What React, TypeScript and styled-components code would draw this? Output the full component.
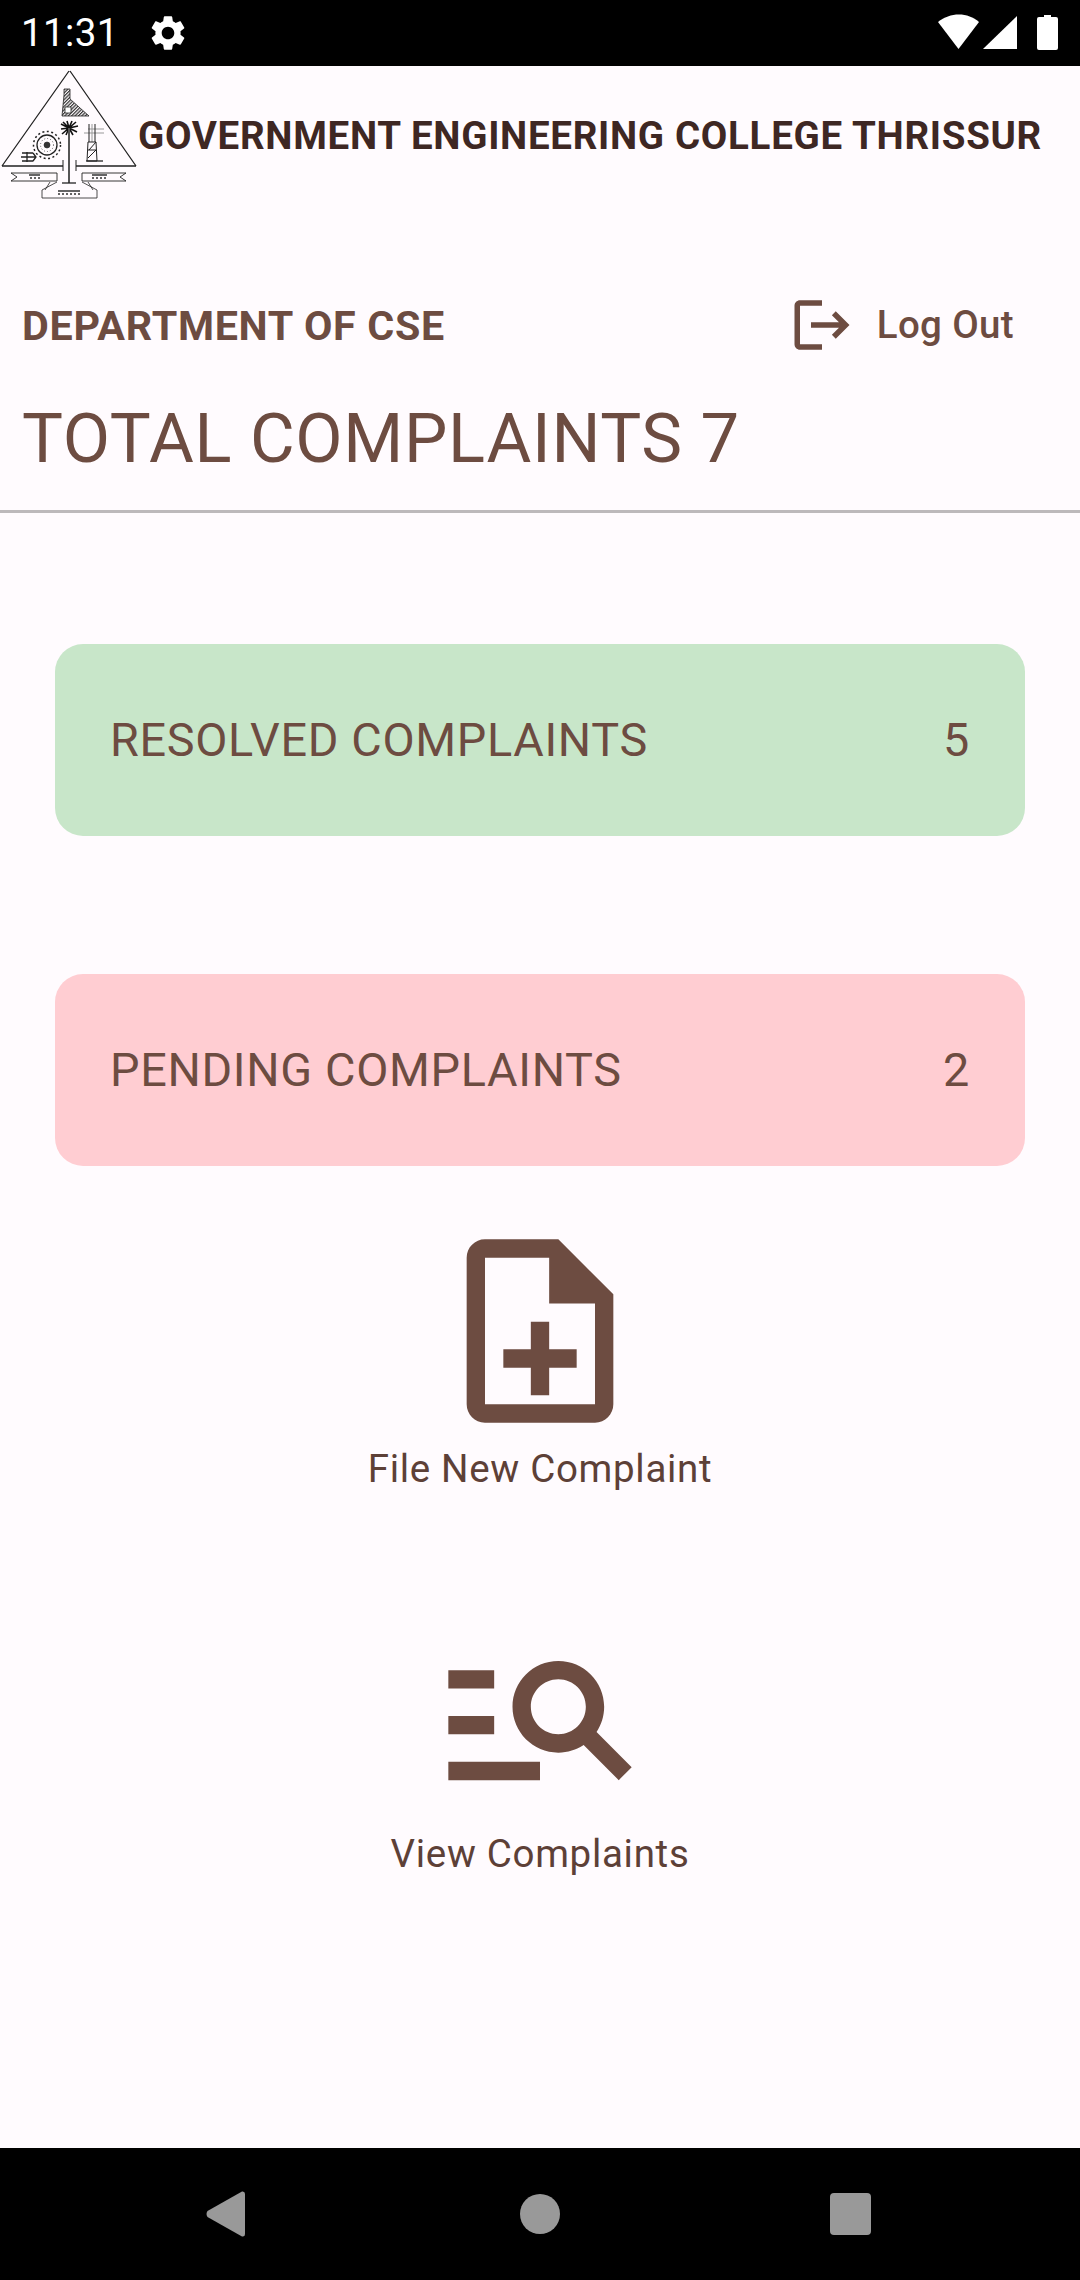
import React from "react";
import styled, { createGlobalStyle } from "styled-components";

const Global = createGlobalStyle`
  html, body { margin: 0; padding: 0; background: #fffbfe; }
  * { box-sizing: border-box; }
`;

const Screen = styled.div`
  width: 1080px;
  height: 2280px;
  display: flex;
  flex-direction: column;
  background: #fffbfe;
  font-family: Roboto, "Liberation Sans", sans-serif;
  overflow: hidden;
`;

const StatusBar = styled.div`
  height: 66px;
  flex: none;
  background: #000;
  color: #fff;
  display: flex;
  align-items: center;
  padding: 0 0 0 21px;
`;

const Clock = styled.span`
  font-size: 38.5px;
  letter-spacing: 0.4px;
  line-height: 66px;
  width: 126px;
`;

const StatusIcons = styled.div`
  margin-left: auto;
  display: flex;
  align-items: center;
`;

const Brand = styled.header`
  height: 138px;
  flex: none;
  display: flex;
  align-items: center;
`;

const Logo = styled.svg`
  width: 138px;
  height: 138px;
  flex: none;
`;

const College = styled.h1`
  margin: 2px 0 0;
  color: #3e2723;
  font-size: 38.5px;
  letter-spacing: 0.69px;
  line-height: 44px;
  font-weight: 700;
  white-space: nowrap;
`;

const DeptRow = styled.div`
  height: 110px;
  margin-top: 66px;
  flex: none;
  display: flex;
  align-items: center;
  justify-content: space-between;
  padding: 0 66px 0 22px;
`;

const Dept = styled.h2`
  margin: 2px 0 0;
  color: #6d4c41;
  font-size: 41.25px;
  letter-spacing: 0.69px;
  font-weight: 700;
  line-height: 46px;
`;

const LogOut = styled.div`
  display: flex;
  align-items: center;
  gap: 22px;
  color: #6d4c41;
  font-size: 38.5px;
  letter-spacing: 0.35px;
  font-weight: 500;
  line-height: 46px;
`;

const Total = styled.h2`
  margin: 20px 0 0;
  padding-left: 22px;
  color: #6d4c41;
  font-size: 68.75px;
  letter-spacing: 0.69px;
  font-weight: 400;
  line-height: 78px;
  flex: none;
`;

const Divider = styled.hr`
  margin: 32px 0 0;
  border: 0;
  height: 3px;
  background: #bdb9bb;
  flex: none;
`;

const Main = styled.main`
  flex: 1;
  display: flex;
  flex-direction: column;
  align-items: center;
  padding-top: 131px;
`;

const StatCard = styled.div<{ $bg: string; $gap: number }>`
  width: 970px;
  height: 192px;
  flex: none;
  border-radius: 28px;
  background: ${(p) => p.$bg};
  color: #6d4c41;
  margin-bottom: ${(p) => p.$gap}px;
  display: flex;
  align-items: center;
  justify-content: space-between;
  padding: 0 55px;
  font-size: 46.75px;
  letter-spacing: 0.69px;
`;

const Action = styled.div<{ $top: number }>`
  display: flex;
  flex-direction: column;
  align-items: center;
  margin-top: ${(p) => p.$top}px;
  color: #5d4037;
  font-size: 38.5px;
  line-height: 46px;
  letter-spacing: 0.69px;
`;

const ActionLabel = styled.span`
  margin-top: 5px;
`;

const NavBar = styled.nav`
  height: 132px;
  flex: none;
  background: #000;
  display: flex;
  align-items: center;
  padding: 0 0 0 206px;
`;

const NavCircle = styled.div`
  width: 40px;
  height: 40px;
  border-radius: 50%;
  background: #999;
  margin-left: 275px;
`;

const NavSquare = styled.div`
  width: 41px;
  height: 42px;
  border-radius: 4px;
  background: #999;
  margin-left: 270px;
`;

const Mono = ({ size, d, color = "#6d4c41" }: { size: number; d: string; color?: string }) => (
  <svg width={size} height={size} viewBox="0 0 24 24" fill={color} style={{ flex: "none" }}>
    <path d={d} />
  </svg>
);

const GEAR =
  "M19.14 12.94c.04-.3.06-.61.06-.94 0-.32-.02-.64-.07-.94l2.03-1.58c.18-.14.23-.41.12-.61l-1.92-3.32c-.12-.22-.37-.29-.59-.22l-2.39.96c-.5-.38-1.03-.7-1.62-.94l-.36-2.54c-.04-.24-.24-.41-.48-.41h-3.84c-.24 0-.43.17-.47.41l-.36 2.54c-.59.24-1.13.57-1.62.94l-2.39-.96c-.22-.08-.47 0-.59.22L2.74 8.87c-.12.21-.08.47.12.61l2.03 1.58c-.05.3-.09.63-.09.94s.02.64.07.94l-2.03 1.58c-.18.14-.23.41-.12.61l1.92 3.32c.12.22.37.29.59.22l2.39-.96c.5.38 1.03.7 1.62.94l.36 2.54c.05.24.24.41.48.41h3.84c.24 0 .44-.17.47-.41l.36-2.54c.59-.24 1.13-.56 1.62-.94l2.39.96c.22.08.47 0 .59-.22l1.92-3.32c.12-.22.07-.47-.12-.61l-2.01-1.58zM12 15.6c-1.98 0-3.6-1.62-3.6-3.6s1.62-3.6 3.6-3.6 3.6 1.62 3.6 3.6-1.62 3.6-3.6 3.6z";
const LOGOUT =
  "M17 7l-1.41 1.41L18.17 11H8v2h10.17l-2.58 2.58L17 17l5-5zM4 5h8V3H4c-1.1 0-2 .9-2 2v14c0 1.1.9 2 2 2h8v-2H4V5z";
const NOTE_ADD_OUTLINED =
  "M13 11h-2v3H8v2h3v3h2v-3h3v-2h-3zm1-9H6c-1.1 0-2 .9-2 2v16c0 1.1.89 2 1.99 2H18c1.1 0 2-.9 2-2V8l-6-6zm4 18H6V4h7v5h5v11z";
const MANAGE_SEARCH =
  "M7 9H2V7h5v2zm0 3H2v2h5v-2zm13.59 7l-3.83-3.83c-.8.52-1.74.83-2.76.83-2.76 0-5-2.24-5-5s2.24-5 5-5 5 2.24 5 5c0 1.02-.31 1.96-.83 2.75L22 17.59 20.59 19zM17 11c0-1.65-1.35-3-3-3s-3 1.35-3 3 1.35 3 3 3 3-1.35 3-3zM2 19h10v-2H2v2z";

const CollegeEmblem = () => (
  <Logo viewBox="0 66 138 138" fill="none" stroke="#222" strokeWidth={1}>
    <defs>
      <pattern id="dam-hatch" width="2.400" height="2.400" patternUnits="userSpaceOnUse" patternTransform="rotate(-45)">
        <rect width="2.400" height="1.200" fill="#333" stroke="none" />
      </pattern>
    </defs>
    <path d="M69 71 L2 166 M70 71 L136 166" strokeWidth={1.300} />
    <path d="M2 166 H63 M76 166 H136" strokeWidth={1.500} />
    <path d="M63 160 V171 M76 160 V171" strokeWidth={1} />
    <path d="M64 89 H70 V99 L89 116 H62 L64 95 Z" fill="url(#dam-hatch)" strokeWidth={0.8} />
    <path d="M65 107 h6 v6 h-6 z" fill="#fff" strokeWidth={0.8} />
    <path
      d="M69 128 L61 124 M69 128 L63 122 M69 128 L67 121 M69 128 L72 121 M69 128 L76 122 M69 128 L78 126 M69 128 L61 129 M69 128 L62 134 M69 128 L66 135 M69 128 L73 135 M69 128 L77 132"
      stroke="#111"
      strokeWidth={1.600}
    />
    <path d="M69 128 V183" strokeWidth={2} stroke="#555" />
    <path d="M62 183 H76" strokeWidth={1.300} />
    <circle cx="47" cy="145" r="10" strokeWidth={1.300} />
    <circle cx="47" cy="145" r="13.500" strokeWidth={1.500} strokeDasharray="2 2.500" />
    <circle cx="47" cy="145" r="3" fill="#333" strokeWidth={0.6} />
    <circle cx="47" cy="145" r="6.500" strokeWidth={0.7} strokeDasharray="1 2" />
    <path d="M22 153 H33 M21 157 H36 M22 161 H33 M33 153 L36 157 L33 161 M27 152 V162" strokeWidth={1.300} />
    <path d="M92 124 V142 M88 129 H104 M84 133 H104" stroke="#999" strokeWidth={1} />
    <path d="M95 124 V142 M89 124 V142 M88 142 H96 L97 161 H87 Z M89 150 L96 142 M88 158 L96 150 M88 150 H96" strokeWidth={1} />
    <path d="M86 161 H103" strokeWidth={1.300} />
    <path d="M11 173 H57 V181 H11 L17 177 Z" strokeWidth={0.9} />
    <path d="M82 173 H126 L120 177 L126 181 H82 Z" strokeWidth={0.9} />
    <path d="M29 175 h11 M30 178 h2 m2 0 h2 m2 0 h2 M92 175 h15 M92 178 h2 m2 0 h2 m2 0 h2 m2 0 h2" stroke="#333" strokeWidth={1.400} />
    <path d="M57 182 L42 190 V198 H97 V190 L82 182" strokeWidth={0.8} />
    <path d="M50 182 L45 190 M88 182 L93 190" strokeWidth={0.8} />
    <path d="M58 191 h22 M58 194 h2 m2 0 h2 m2 0 h2 m2 0 h2 m2 0 h2 m2 0 h2" stroke="#333" strokeWidth={1.400} />
  </Logo>
);

export default function App() {
  return (
    <Screen>
      <Global />
      <StatusBar>
        <Clock>11:31</Clock>
        <Mono size={42} d={GEAR} color="#fff" />
        <StatusIcons>
          <svg width="142" height="40" viewBox="0 0 142 40" fill="#fff">
            <path d="M0 9 C12 -1 30 -1 41 9 L20.500 36 Z" />
            <path d="M45 36 L79 3 V36 Z" />
            <path d="M99 6 a2 2 0 0 1 2 -2 h5 v-2 h7 v2 h5 a2 2 0 0 1 2 2 v29 a2 2 0 0 1 -2 2 h-17 a2 2 0 0 1 -2 -2 Z" />
          </svg>
        </StatusIcons>
      </StatusBar>
      <Brand>
        <CollegeEmblem />
        <College>GOVERNMENT ENGINEERING COLLEGE THRISSUR</College>
      </Brand>
      <DeptRow>
        <Dept>DEPARTMENT OF CSE</Dept>
        <LogOut>
          <Mono size={66} d={LOGOUT} />
          Log Out
        </LogOut>
      </DeptRow>
      <Total>TOTAL COMPLAINTS 7</Total>
      <Divider />
      <Main>
        <StatCard $bg="#c8e6c9" $gap={138}>
          <span>RESOLVED COMPLAINTS</span>
          <span>5</span>
        </StatCard>
        <StatCard $bg="#ffcdd2" $gap={0}>
          <span>PENDING COMPLAINTS</span>
          <span>2</span>
        </StatCard>
        <Action $top={55}>
          <Mono size={220} d={NOTE_ADD_OUTLINED} />
          <ActionLabel>File New Complaint</ActionLabel>
        </Action>
        <Action $top={114}>
          <Mono size={220} d={MANAGE_SEARCH} />
          <ActionLabel>View Complaints</ActionLabel>
        </Action>
      </Main>
      <NavBar>
        <svg width="39" height="46" viewBox="0 0 39 46" fill="#999">
          <path d="M36 0.500 Q39 0 39 3 V43 Q39 46 36 45.500 L1.500 26 Q-0.500 23 1.500 20 Z" />
        </svg>
        <NavCircle />
        <NavSquare />
      </NavBar>
    </Screen>
  );
}
